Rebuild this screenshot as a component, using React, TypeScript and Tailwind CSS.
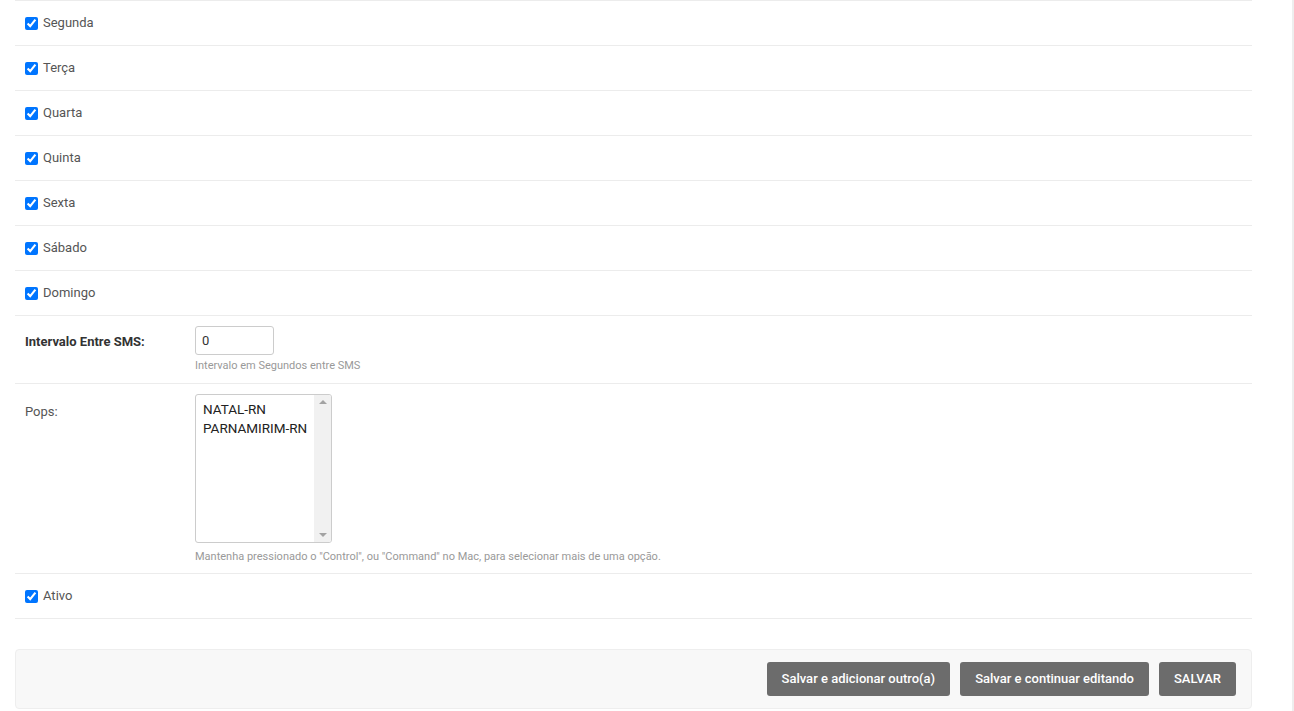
import React from 'react';

const days = ['Segunda', 'Terça', 'Quarta', 'Quinta', 'Sexta', 'Sábado', 'Domingo'];

const CheckRow = ({ label }: { label: string }) => (
  <div className="flex h-[45px] items-center border-b border-[#ececec] px-[10px]">
    <input type="checkbox" defaultChecked className="m-0 h-[13px] w-[13px] accent-[#0075ff]" />
    <span className="ml-[5px] text-[13px] text-[#555]">{label}</span>
  </div>
);

export default function App() {
  return (
    <div
      className="flex min-h-[711px] w-[1294px] bg-white"
      style={{ fontFamily: 'Roboto, "Liberation Sans", sans-serif' }}
    >
      <div className="flex-1">
        <div className="ml-[15px] w-[1237px] border-t border-[#ececec]">
          {days.map((d) => (
            <CheckRow key={d} label={d} />
          ))}

          <div className="flex border-b border-[#ececec] px-[10px] pt-[10px] pb-[8px]">
            <div className="w-[170px] pt-[6px] text-[13px] font-bold text-[#333]">
              Intervalo Entre SMS:
            </div>
            <div>
              <input
                defaultValue="0"
                className="h-[29px] w-[79px] rounded-[3px] border border-[#ccc] px-[6px] text-[13px] text-[#333] outline-none"
              />
              <div className="mt-[3px] text-[11px] text-[#999]">Intervalo em Segundos entre SMS</div>
            </div>
          </div>

          <div className="flex border-b border-[#ececec] px-[10px] pt-[10px] pb-[8px]">
            <div className="w-[170px] pt-[8px] text-[13px] text-[#555]">Pops:</div>
            <div>
              <div className="flex h-[149px] w-[137px] overflow-hidden rounded-[3px] border border-[#ccc]">
                <div className="min-w-0 flex-1 whitespace-nowrap pl-[7px] pt-[5px] text-[13.5px] leading-[19px] text-[#222]">
                  <div>NATAL-RN</div>
                  <div>PARNAMIRIM-RN</div>
                </div>
                <div className="flex w-[17px] shrink-0 flex-col items-center justify-between bg-[#f1f1f1] py-[5px]">
                  <div className="h-0 w-0 border-x-[4px] border-b-[4px] border-x-transparent border-b-[#a3a3a3]" />
                  <div className="h-0 w-0 border-x-[4px] border-t-[4px] border-x-transparent border-t-[#a3a3a3]" />
                </div>
              </div>
              <div className="mt-[6px] text-[11px] text-[#999]">
                Mantenha pressionado o "Control", ou "Command" no Mac, para selecionar mais de uma opção.
              </div>
            </div>
          </div>

          <CheckRow label="Ativo" />

          <div className="mt-[30px] flex justify-end gap-[10px] rounded-[4px] border border-[#eee] bg-[#f8f8f8] px-[15px] py-[12px]">
            <button className="h-[34px] rounded-[3px] bg-[#6c6c6c] px-[15px] text-[13px] font-medium text-white">
              Salvar e adicionar outro(a)
            </button>
            <button className="h-[34px] rounded-[3px] bg-[#6c6c6c] px-[15px] text-[13px] font-medium text-white">
              Salvar e continuar editando
            </button>
            <button className="h-[34px] rounded-[3px] bg-[#6c6c6c] px-[15px] text-[13px] font-medium text-white">
              SALVAR
            </button>
          </div>
        </div>
      </div>
      <div className="w-[2px] bg-[#eee]" />
    </div>
  );
}
